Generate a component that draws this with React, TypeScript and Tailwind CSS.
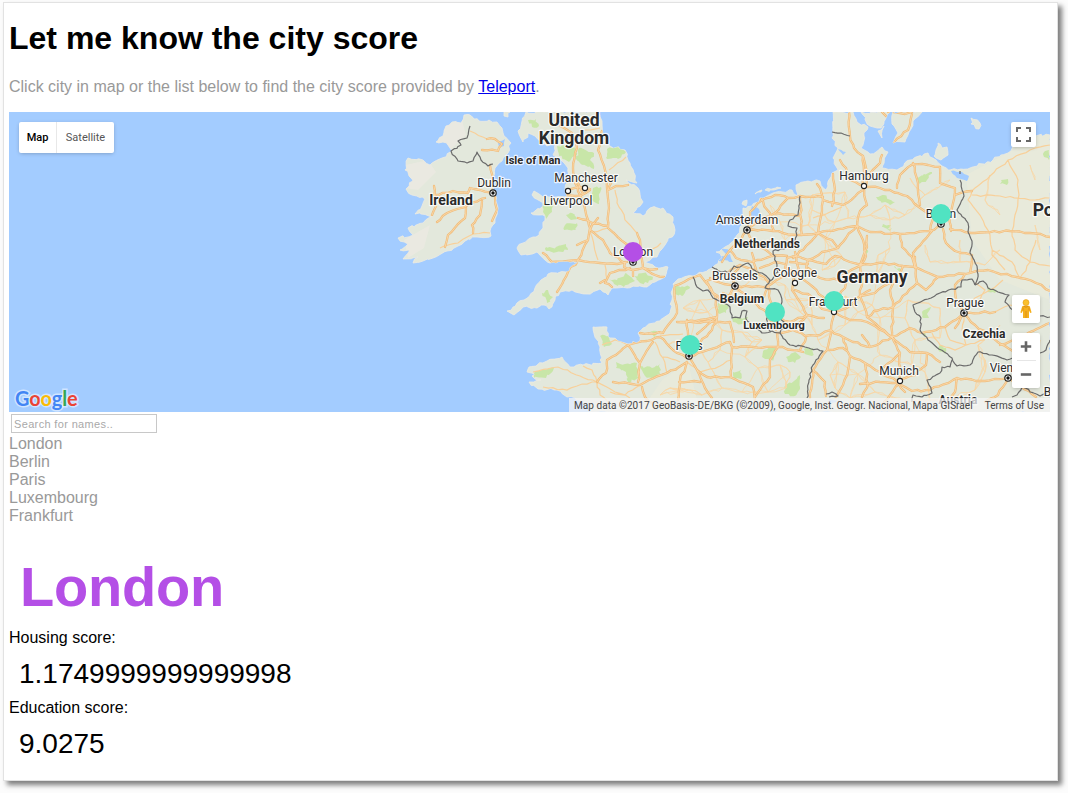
import React from "react";

type Pt = [number, number];

const parse = (s: string): Pt[] =>
  s.trim().split(/\s+/).map((p) => p.split(",").map(Number) as Pt);

/* Deterministic noise so that coasts and roads are never perfectly straight. */
const noise = (a: number, b: number) => {
  const v = Math.sin(a * 12.9898 + b * 78.233) * 43758.5453;
  return (v - Math.floor(v)) * 2 - 1;
};

const rough = (s: string, amp: number, step = 6, closed = false) => {
  const pts = parse(s);
  if (closed) pts.push(pts[0]);
  let d = `M${pts[0][0]} ${pts[0][1]}`;
  for (let i = 1; i < pts.length; i++) {
    const [x0, y0] = pts[i - 1];
    const [x1, y1] = pts[i];
    const n = Math.max(1, Math.round(Math.hypot(x1 - x0, y1 - y0) / step));
    for (let k = 1; k <= n; k++) {
      const t = k / n;
      const j = k === n ? 0 : amp;
      const x = x0 + (x1 - x0) * t + noise(x0 + k, y1) * j;
      const y = y0 + (y1 - y0) * t + noise(y0 + k, x1) * j;
      d += `L${x.toFixed(1)} ${y.toFixed(1)}`;
    }
  }
  return closed ? d + "Z" : d;
};

const land = [
  "470,115 474,119 479,121 489,120 497,122 502,128 504,136 511,143 508,153 502,161 495,168 492,180 494,193 498,208 495,223 490,231 491,236 477,237 465,241 458,246 447,251 433,258 423,261 413,263 418,257 403,259 410,250 400,250 408,244 398,238 413,235 408,228 423,223 433,216 415,214 422,206 425,199 412,195 406,189 413,181 405,170 408,158 423,160 430,165 442,158 452,151 448,145 436,142 443,136 446,126 452,122 461,123 464,115",
  "526,112 518,131 523,142 528,133 535,136 541,142 547,146 555,144 553,155 561,160 568,168 569,180 565,188 567,196 543,197 534,191 532,195 540,201 543,206 531,213 545,216 543,228 536,237 523,243 517,248 521,255 537,252 545,260 550,263 570,262 579,261 566,272 548,274 541,280 535,288 524,300 507,311 514,315 523,307 537,308 544,305 549,309 555,300 560,292 572,290 587,294 600,289 608,295 612,288 627,288 647,287 655,282 665,277 668,267 655,267 645,262 657,257 665,245 675,230 673,217 663,208 650,208 643,216 633,213 643,202 638,188 626,180 637,183 630,163 625,150 610,146 603,136 602,121 597,112",
  "590,412 588,403 567,397 557,390 538,389 529,382 541,380 532,376 540,374 527,372 529,367 547,361 562,357 570,367 583,365 602,363 600,347 593,327 607,327 608,337 618,341 628,344 640,341 638,333 643,328 660,321 670,313 672,300 673,284 678,279 693,276 712,268 722,258 716,252 729,245 737,235 742,225 743,208 752,206 760,198 773,193 792,190 797,196 796,185 808,181 820,181 826,190 832,173 838,170 833,158 838,148 832,138 833,112 853,112 857,122 868,127 864,136 861,148 870,154 882,147 888,152 882,168 897,170 910,160 928,153 936,160 942,166 950,170 970,168 993,160 1008,153 1013,146 1023,141 1033,136 1050,135 1050,412",
  "861,112 890,112 886,118 881,128 870,126",
  "893,112 922,112 913,121 909,132 905,142 893,143 898,133 892,124",
  "938,143 942,148 947,147 948,155 941,160 934,156 936,150",
  "971,118 980,123 979,129 971,124",
  "504,112 510,112 508,117 504,116",
  "878,131 884,126 882,138",
  "742,204 747,200 746,206",
  "755,194 762,190 761,192",
  "765,190 781,188 774,190",
];

const lakes = [
  "951,171 962,172 969,176 967,181 957,178",
  "752,206 759,209 761,222 751,220 750,211",
  "838,149 846,152 843,155",
  "498,143 505,139 504,146 499,147",
  "826,398 840,401 832,403",
  "717,257 730,254 733,262 724,260 715,262",
  "719,247 732,252 726,254",
];

const greens = [
  "528,120 536,119 539,126 532,127", "557,146 572,144 577,155 569,162 559,156", "579,148 594,153 590,160 594,169 583,165 576,159",
  "607,149 617,147 626,152 618,159 606,158", "593,188 601,187 599,204 592,200", "541,204 553,204 552,212 546,219 543,212",
  "565,225 577,223 576,230 564,230", "546,247 556,247 566,244 568,250 557,252 546,251", "609,279 617,280 626,273 635,281 624,287 614,284",
  "634,276 643,273 653,277 648,283 640,283", "566,215 572,213 577,218 571,220", "542,293 548,290 553,297 547,303",
  "600,336 609,336 612,344 604,347", "616,362 625,364 637,363 639,378 628,382 626,372 616,368", "640,366 652,368 660,364 660,374 652,379 645,376",
  "536,371 544,370 554,368 546,378 534,378", "673,286 690,287 682,296 675,294", "650,331 657,331 655,338",
  "718,303 728,305 726,313 718,313", "732,319 748,317 742,324 733,322", "764,350 772,346 776,352 773,361 762,357",
  "786,357 795,352 801,357 795,363 788,362", "784,387 794,381 801,374 800,389 795,396 785,394", "733,372 741,370 741,379 732,379",
  "804,349 814,347 812,356 804,353", "876,197 884,195 895,202 890,205 878,200", "916,178 924,174 932,172 927,180 918,184",
  "1001,180 1008,179 1007,185 1000,184", "1044,152 1049,150 1049,160 1044,157", "922,312 931,307 927,314 929,318 922,317",
  "940,345 946,348 945,354 938,349", "988,288 997,290 995,293 988,292", "894,266 902,270 900,273", "922,331 926,335 924,337",
  "883,224 891,225 889,228 882,227", "770,322 779,318 778,326 770,327", "862,248 868,250 866,254", "887,229 892,228 890,231",
];

const motorways = [
  "493,193 480,190 470,188 468,193 453,191 433,195", "490,165 492,180 493,193", "434,186 436,206 432,215",
  "485,198 468,205 447,213 437,222", "466,208 465,218 448,235 445,247", "482,201 480,215 472,225 473,233",
  "495,195 497,210 492,221", "482,150 498,151 502,144 495,139 487,139",
  "560,126 572,133 577,148 573,168 575,183 582,201 588,220 590,228 588,240 578,260 568,272 557,292",
  "602,131 598,150 605,170 607,188 609,208 608,228 625,243 632,250",
  "590,230 603,240 610,253 625,263", "627,262 617,264 600,263 578,260 552,262 543,253",
  "630,268 610,273 605,283 612,287", "605,280 600,283", "625,262 624,267 633,270 643,268 642,260",
  "643,268 655,275 664,277", "643,268 657,269", "642,260 640,240 637,233", "633,270 633,276",
  "568,190 578,187 590,189", "565,195 580,196 590,190", "578,183 583,194", "608,190 616,186 628,185", "608,190 612,178",
  "578,218 590,222 608,226", "590,230 598,218", "577,245 588,240",
  "675,300 677,313 663,333 640,333", "660,337 673,350 687,358", "660,337 628,345 607,360 606,373 597,382",
  "628,345 640,363 638,382", "653,342 645,354 640,363", "613,382 640,385 667,373 687,362", "642,387 645,397 655,407",
  "677,322 700,320 717,317", "675,300 674,286 684,282 700,275", "687,320 689,356",
  "689,356 708,350 730,342 732,347 777,347 803,352", "689,356 697,370 707,377 730,377 753,387 755,400",
  "732,347 731,377", "777,333 778,347 770,360 770,377 755,397", "680,322 715,322 730,322 734,342",
  "697,334 717,317 716,300 713,293 700,275", "713,293 725,303 736,286", "713,293 706,281 720,277 740,265",
  "736,286 733,277 740,265 756,270 768,282", "736,286 752,287 768,286 782,277 795,272", "736,286 748,298 764,310 776,330",
  "736,286 724,284 710,278", "768,286 770,300 776,316 776,330", "723,293 745,300 764,297 768,287",
  "795,272 785,268 787,258 797,256 808,260 806,270 795,272", "790,262 808,264", "795,252 799,270", "785,264 775,262 760,268",
  "747,230 741,240 730,250 736,258 752,262 772,256 787,256", "747,230 752,243 766,250 773,256", "741,240 755,247 773,240",
  "747,230 773,231 797,235 818,233 857,226", "747,230 760,221 775,213 788,198 775,195 762,200 750,212 748,225",
  "760,198 770,213 774,231", "775,213 798,216", "788,198 800,196 823,197", "800,196 802,235", "752,253 756,269",
  "730,250 722,262", "793,258 806,246 818,233 822,211 823,200", "823,200 820,188 817,184", "823,200 843,205 863,190",
  "832,206 835,190 833,174", "863,186 867,205 860,211 857,226 863,240 866,256 860,265", "850,136 849,112",
  "850,136 854,148 863,156 864,172 863,186", "863,156 866,168 866,186", "864,186 850,180 846,168 840,160",
  "808,260 822,252 838,248 846,238 857,226", "838,248 832,240 818,233", "808,260 826,264 835,256 850,262 862,265",
  "795,272 813,287 826,300 834,312", "808,268 820,278 838,280 848,272 862,265", "848,272 845,288 836,300",
  "834,312 831,330 827,350 813,370 810,398", "834,312 850,306 860,296 870,290", "834,312 850,320 867,322 892,337",
  "795,275 792,290 800,302 807,315 793,330 778,333", "795,290 808,294 822,309 834,312", "776,316 790,322 807,315 824,318",
  "793,330 805,336 820,335 831,330", "800,350 806,338", "831,330 843,337 853,342 870,347 892,337", "827,350 843,348 850,356 865,363",
  "843,337 847,349", "850,356 848,370 843,385 836,397", "865,363 880,372 898,382", "813,370 825,382 826,396", "865,363 868,384 862,397",
  "857,226 870,232 900,234 930,231 942,225", "950,229 975,233 1010,231 1030,233 1050,237",
  "942,225 932,217 923,210 907,196 880,188 863,186", "913,163 918,183 920,205", "897,188 900,175 913,164 928,165 940,167 940,183 955,188 950,218",
  "955,195 972,191", "932,231 913,253 915,268", "943,229 946,243 955,251 972,255", "930,231 933,219 950,217 951,231",
  "867,236 867,247 860,265 885,263 903,266 915,267", "900,234 902,247 912,257 915,267 938,277 970,273 972,256",
  "970,273 988,270 1020,278 1036,283 1050,291", "915,257 917,283 893,307 892,337 900,353 900,380", "903,266 896,280 890,290 893,307",
  "917,283 926,290 938,277", "892,337 910,328 922,333 945,327 964,313 995,312", "892,337 910,352 927,353 940,362",
  "892,337 880,328 867,317 860,295 862,280 860,265", "867,317 874,311 893,307", "860,296 875,293 888,284 896,280",
  "870,347 862,335", "860,384 880,382 897,383 912,391 930,390 957,378 985,381 1008,378", "900,380 915,375 926,365 927,353",
  "900,380 890,395 884,402", "880,372 892,361 900,353", "898,383 905,392", "957,378 955,392 948,402",
  "964,313 955,328", "964,313 975,325 993,338 1005,346 1022,357", "1000,345 1020,337 1050,323", "964,313 957,302 955,285 965,274",
  "1008,378 1020,386 1036,397", "1008,378 998,395 985,402", "882,112 888,118", "888,112 905,114 912,112", "912,114 908,130 894,142",
  "882,155 880,163 866,178", "687,362 680,380 678,400", "679,382 700,382", "697,370 705,388 712,398", "689,350 700,343 712,330 717,317",
];

const minors = [
  "440,248 458,243 473,234 490,233", "470,131 487,139", "585,130 600,128", "609,170 626,157", "628,223 617,203 615,190", "637,233 628,223",
  "608,228 592,232", "605,265 607,280", "645,255 661,243", "590,232 598,260", "533,372 558,367 580,376 597,382", "543,387 567,390 582,384 597,382",
  "597,382 600,395 612,404", "597,382 615,392 630,398", "597,382 592,370 583,366", "660,335 683,334", "663,357 680,362", "687,362 700,372 720,366 731,360",
  "602,345 615,340 628,345", "640,385 625,395 610,392", "655,342 663,358 667,373",
  "972,191 968,200 980,215 990,235 992,255 1005,270", "972,191 990,176 1008,160 1030,150 1050,145", "1008,160 1018,180 1019,195 1015,215 1012,231",
  "972,195 1000,196 1030,200 1050,198", "1012,231 1015,250 1030,262 1050,266", "992,250 1012,262 1020,278", "1020,278 1030,262 1036,240",
  "813,218 830,212 842,207", "760,225 772,222", "932,333 940,345 955,350 966,345", "945,327 950,340 966,345 985,340",
  "964,313 975,298 990,290 1003,280", "995,312 1010,305 1028,308", "980,300 985,290 975,283", "966,345 962,330 964,315",
];

/* Small towns; each is joined to its nearest neighbours by a thin road. */
const towns = parse(
  "700,300 708,312 722,330 742,332 752,342 762,340 745,357 758,368 780,365 790,372 786,388 768,392 742,392 722,388 708,362 720,350 702,395 688,390 670,388 660,395 668,345 690,338 683,308 695,312 730,297 757,277 785,285 786,300 800,312 812,325 818,340 812,300 822,270 835,266 845,296 858,312 872,305 880,318 845,325 878,340 880,355 858,374 875,392 838,362 830,375 835,388 915,340 912,365 925,372 905,318 908,300 930,262 925,245 890,248 878,255 876,275 890,220 905,215 885,205 910,178 925,195 950,180 870,215 848,218 835,222 845,192 812,210 812,195 808,225 785,240 780,222 770,205 825,240 842,256 960,240 985,265 960,262 1000,250 1035,225 1000,215 985,200 1035,180 990,175 1030,165 1040,250 1035,305 1000,325 1040,340 1030,370 985,360 975,390 985,372 950,398 930,400 1010,398 940,308 978,345 940,338 905,400 850,398"
);

const townRoads = towns
  .map((t, i) =>
    towns
      .map((u, k) => ({ k, d: Math.hypot(u[0] - t[0], u[1] - t[1]) }))
      .filter((o) => o.k !== i && o.d < 34)
      .sort((a, b) => a.d - b.d)
      .slice(0, 3)
      .map((o) => rough(`${t[0]},${t[1]} ${towns[o.k][0]},${towns[o.k][1]}`, 1.8, 6))
      .join("")
  )
  .join("");

const borders = [
  "470,126 467,138 458,141 461,145 451,151 458,161 467,163 473,161 477,152 481,160 488,166 493,164",
  "832,132 841,133 850,136", "960,171 960,174", "960,180 964,196 957,210 968,223 968,232 972,241 970,253 977,266 978,274 975,285",
  "975,285 972,279 967,280 962,280 961,287 940,293 928,299 918,303 913,305 915,312 921,318 920,330 928,340 952,358 957,366 970,365 978,352 992,355 1007,360 1020,357 1040,353 1046,350 1050,340",
  "975,285 983,281 988,288 998,292 1009,295 1005,302 1013,310 1028,312 1040,316 1050,317",
  "952,360 950,367 942,367 940,373 927,380 932,393 922,397 913,395 912,402",
  "693,277 697,287 703,291 708,290 713,298 722,302 730,307 732,318 740,318 742,311 747,311 746,319 752,326 762,333 772,331 780,333 790,345 805,347 823,351 813,365 809,380 807,398",
  "712,267 722,272 730,272 734,266 740,267 748,263 752,269 762,273 770,280 765,288 778,290 782,302 776,312 784,322 780,333",
  "768,316 766,324 771,332", "770,281 778,272 777,265 773,251 784,249 795,241 797,228 788,226 790,220 798,215 800,196",
  "826,394 832,392 838,396 829,397", "1050,392 1040,396 1030,392 1023,386 1017,395 1012,397",
];

type Label = { t: string; x: number; y: number; s: number; b?: boolean };
const labels: Label[] = [
  { t: "United", x: 574, y: 126, s: 17.5, b: true },
  { t: "Kingdom", x: 574, y: 144, s: 17.5, b: true },
  { t: "Isle of Man", x: 533, y: 164, s: 11, b: true },
  { t: "Ireland", x: 451, y: 205, s: 14, b: true },
  { t: "Dublin", x: 494, y: 187, s: 12 },
  { t: "Manchester", x: 586, y: 182, s: 12 },
  { t: "Liverpool", x: 568, y: 205, s: 12 },
  { t: "London", x: 633, y: 256, s: 12 },
  { t: "Amsterdam", x: 747, y: 224, s: 12 },
  { t: "Netherlands", x: 767, y: 248, s: 12, b: true },
  { t: "Brussels", x: 735, y: 280, s: 12 },
  { t: "Cologne", x: 795, y: 277, s: 12 },
  { t: "Belgium", x: 742, y: 303, s: 12, b: true },
  { t: "Luxembourg", x: 774, y: 329, s: 11, b: true },
  { t: "Germany", x: 872, y: 283, s: 17.5, b: true },
  { t: "Frankfurt", x: 833, y: 306, s: 12 },
  { t: "Hamburg", x: 864, y: 180, s: 12 },
  { t: "Berlin", x: 941, y: 218, s: 12 },
  { t: "Paris", x: 689, y: 350, s: 12 },
  { t: "Prague", x: 965, y: 307, s: 12 },
  { t: "Czechia", x: 984, y: 338, s: 12, b: true },
  { t: "Munich", x: 899, y: 375, s: 12 },
  { t: "Vienna", x: 1008, y: 372, s: 12 },
  { t: "Austria", x: 958, y: 404, s: 12, b: true },
  { t: "Poland", x: 1060, y: 216, s: 17.5, b: true },
  { t: "Budapest", x: 1069, y: 396, s: 12 },
];

const capitals = parse("493,193 633,262 747,230 735,286 689,356 941,224 964,313 1008,378");
const cities = parse("568,191 585,188 795,283 834,312 864,186 900,381");

const markers = [
  { name: "London", x: 633, y: 252, color: "#b44fe6" },
  { name: "Berlin", x: 941, y: 214, color: "#50e3c2" },
  { name: "Paris", x: 690, y: 345, color: "#50e3c2" },
  { name: "Luxembourg", x: 775, y: 312, color: "#50e3c2" },
  { name: "Frankfurt", x: 834, y: 301, color: "#50e3c2" },
];

function MapCanvas() {
  const roads = motorways.map((r) => rough(r, 1, 5)).join("");
  return (
    <svg className="block h-[300px] w-[1041px]" viewBox="9 112 1041 300">
      <rect x="9" y="112" width="1041" height="300" fill="#a3ccff" />
      <clipPath id="land">
        {land.map((l) => <path key={l} d={rough(l, 1.5, 3.5, true)} />)}
      </clipPath>
      <g fill="#e3e8dc" stroke="#edebe2" strokeWidth="0.8" strokeLinejoin="round">
        {land.map((l) => <path key={l} d={rough(l, 1.5, 3.5, true)} />)}
      </g>
      <g clipPath="url(#land)">
        <path d="M966 175L1050 130V300L1000 280L972 240ZM640 412L662 380L688 362L700 412Z" fill="#e9eadb" opacity="0.8" />
        <path d="M436 141L446 124L462 120L466 135L450 150ZM405 165L428 160L436 172L418 190L404 188ZM404 240L430 225L424 248L408 258Z" fill="#eceae2" opacity="0.7" />
        <g fill="#c8e6a8">
          {greens.map((g) => <path key={g} d={rough(g, 1.4, 2.5, true)} />)}
        </g>
        <g fill="#a3ccff">
          {lakes.map((l) => <path key={l} d={rough(l, 0.8, 3, true)} />)}
        </g>
        <path d={townRoads} fill="none" stroke="#f9d7a6" strokeWidth="0.8" />
        <path d={minors.map((r) => rough(r, 1, 5)).join("")} fill="none" stroke="#f8d09a" strokeWidth="1.2" />
        <g fill="none" strokeLinejoin="round" strokeLinecap="round">
          <path d={roads} stroke="#f0bd7c" strokeWidth="2.3" />
          <path d={roads} stroke="#fbdcb0" strokeWidth="0.8" />
        </g>
      </g>
      <g fill="none" stroke="#6b6b6b" strokeWidth="1.2" strokeLinejoin="round">
        {borders.map((b) => <path key={b} d={rough(b, 0.9, 3)} />)}
      </g>
      <g fill="#fff" stroke="#222">
        {cities.map(([x, y]) => <circle key={x} cx={x} cy={y} r="2.6" strokeWidth="1.1" />)}
        {capitals.map(([x, y]) => (
          <g key={x}>
            <circle cx={x} cy={y} r="3.2" strokeWidth="1.2" />
            <circle cx={x} cy={y} r="1.7" fill="#111" stroke="none" />
          </g>
        ))}
      </g>
      <g fontFamily="Roboto, sans-serif" textAnchor="middle" fill="#2a2a2a" stroke="#fff" strokeOpacity="0.8" strokeWidth="2.4" strokeLinejoin="round" paintOrder="stroke">
        {labels.map((l) => (
          <text key={l.t} x={l.x} y={l.y} fontSize={l.s} fontWeight={l.b ? 700 : 400}>{l.t}</text>
        ))}
      </g>
      {markers.map((m) => <circle key={m.name} cx={m.x} cy={m.y} r="10" fill={m.color} />)}
    </svg>
  );
}

function GoogleLogo() {
  const letters: [string, string][] = [
    ["G", "text-[#4285f4]"], ["o", "text-[#ea4335]"], ["o", "text-[#fbbc05]"],
    ["g", "text-[#4285f4]"], ["l", "text-[#34a853]"], ["e", "text-[#ea4335]"],
  ];
  return (
    <div className="absolute bottom-[2px] left-[6px] font-[Lato,sans-serif] text-[20px] leading-[24px] font-bold tracking-[-0.15px] [-webkit-text-stroke:3px_rgba(255,255,255,0.5)] [paint-order:stroke_fill]">
      {letters.map(([c, cls], i) => <span key={i} className={cls}>{c}</span>)}
    </div>
  );
}

const control = "absolute rounded-[2px] bg-white shadow-[0_1px_4px_-1px_rgba(0,0,0,0.3)]";

function CityMap() {
  return (
    <div className="relative h-[300px] w-[1041px] overflow-hidden font-[Roboto,sans-serif]">
      <MapCanvas />
      <div className={`${control} top-[10px] left-[10px] flex h-[31px] items-center text-[11px]`}>
        <span className="flex h-full w-[37px] items-center justify-center pt-px font-medium text-black">Map</span>
        <span className="flex h-full w-[58px] items-center justify-center border-l border-[#e8e8e8] pt-px text-[#565656]">Satellite</span>
      </div>
      <div className={`${control} top-[10px] left-[1002px] flex size-[25px] items-center justify-center`}>
        <svg className="size-[15px]" viewBox="0 0 15 15" fill="none" stroke="#666" strokeWidth="2">
          <path d="M1 5V1H5M10 1H14V5M14 10V14H10M5 14H1V10" />
        </svg>
      </div>
      <div className="absolute right-0 bottom-0 flex h-[14px] w-[481px] items-center justify-between bg-[#f5f5f5]/75 pt-[2px] pr-[6px] pl-[5px] text-[10px] whitespace-nowrap text-[#444]">
        <span className="tracking-[0.05px]">Map data ©2017 GeoBasis-DE/BKG (©2009), Google, Inst. Geogr. Nacional, Mapa GISrael</span>
        <span>Terms of Use</span>
      </div>
      <div className={`${control} top-[183px] left-[1003px] flex size-[28px] items-center justify-center`}>
        <svg className="h-[20px] w-[12px]" viewBox="0 0 12 20">
          <path d="M2.2 7.2Q6 5.6 9.8 7.2L11.6 13.5L10.2 14L9 11.5V19H3V11.5L1.8 14L.4 13.5Z" fill="#f5b01e" />
          <path d="M6 12V19M3 11.5V8.5M9 11.5V8.5" stroke="#d98b12" strokeWidth="0.8" />
          <circle cx="6" cy="3.6" r="3" fill="#fbc02d" stroke="#e09a15" strokeWidth="0.6" />
          <path d="M3.5 7.3Q6 9 8.5 7.3" fill="none" stroke="#d98b12" strokeWidth="0.9" />
        </svg>
      </div>
      <div className={`${control} top-[221px] left-[1003px] flex h-[55px] w-[28px] flex-col items-center`}>
        <svg className="h-[27px] w-[12px]" viewBox="0 0 12 27" stroke="#666" strokeWidth="2.6">
          <path d="M.8 13.5H11.2M6 8.3V18.7" />
        </svg>
        <div className="h-px w-[19px] bg-[#e6e6e6]" />
        <svg className="h-[27px] w-[12px]" viewBox="0 0 12 27" stroke="#666" strokeWidth="2.6">
          <path d="M.8 13.5H11.2" />
        </svg>
      </div>
      <GoogleLogo />
    </div>
  );
}

export default function App() {
  return (
    <div className="h-[793px] w-[1068px] overflow-hidden bg-[#fcfcfc] pt-[2px] pl-[3px] font-['Liberation_Sans',Arial,sans-serif]">
      <main className="h-[779px] w-[1055px] border border-[#e2e2e2] bg-white pl-[5px] text-[16px] leading-[18px] text-black shadow-[4px_4px_5px_rgba(0,0,0,0.5)]">
        <h1 className="pt-[17px] text-[32px] leading-[36px] font-bold">Let me know the city score</h1>
        <p className="mt-[22px] text-[#999]">
          Click city in map or the list below to find the city score provided by{" "}
          <a className="text-[#0000ee] underline" href="#teleport">Teleport</a>.
        </p>
        <div className="mt-[16px]">
          <CityMap />
        </div>
        <input
          className="mt-[2px] ml-[2px] block h-[19px] w-[146px] border border-[#c8c8c8] px-[2px] text-[11px] tracking-[0.35px] outline-none placeholder:text-[#a9a9a9]"
          placeholder="Search for names.."
        />
        <ul className="mt-[2px] text-[#999]">
          {["London", "Berlin", "Paris", "Luxembourg", "Frankfurt"].map((c) => <li key={c}>{c}</li>)}
        </ul>
        <section className="pt-[30px]">
          <h2 className="pl-[11px] text-[56px] leading-[64px] font-bold tracking-[-0.2px] text-[#b44fe6]">London</h2>
          <div className="pt-[10px]">Housing score:</div>
          <div className="pt-[11px] pl-[10px] text-[28px] leading-[32px]">1.1749999999999998</div>
          <div className="pt-[9px]">Education score:</div>
          <div className="pt-[11px] pl-[10px] text-[28px] leading-[32px]">9.0275</div>
        </section>
      </main>
    </div>
  );
}
